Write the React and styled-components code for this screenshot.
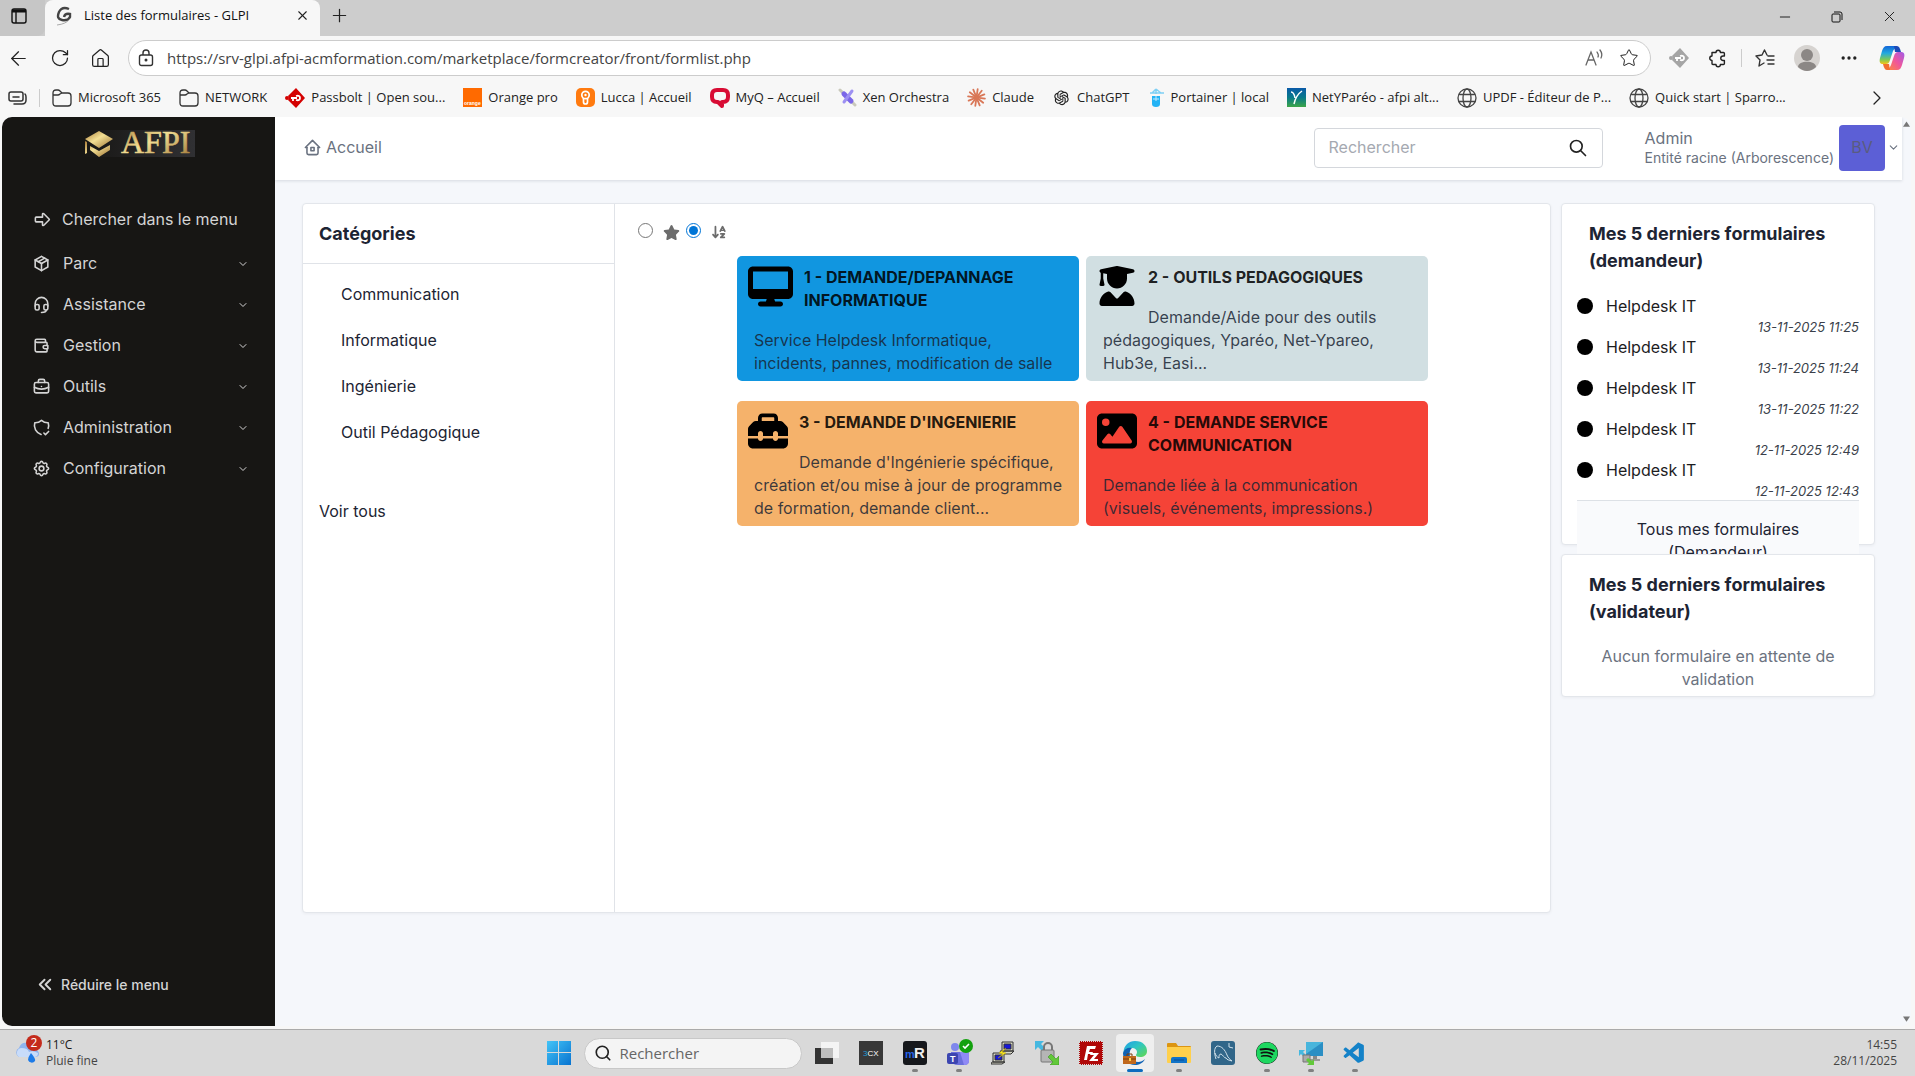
import React, { useState } from 'react';
import styled, { createGlobalStyle } from 'styled-components';

import {
  TbArrowBigRight,
  TbPackage,
  TbHeadset,
  TbWallet,
  TbBriefcase,
  TbShieldCheck,
  TbSettings,
  TbHome2,
  TbSearch,
  TbChevronDown,
  TbChevronsLeft,
} from 'react-icons/tb';
import { FaDesktop, FaUserGraduate, FaToolbox, FaImage, FaStar, FaArrowDownAZ } from 'react-icons/fa6';
import { FaSpotify } from 'react-icons/fa';
import { AiOutlineOpenAI } from 'react-icons/ai';
import { VscVscode } from 'react-icons/vsc';
import { X, Plus, Minus, ArrowLeft, RotateCw, House, Star, Ellipsis, ChevronRight, Search } from 'lucide-react';

const menu = [
  { label: 'Parc', Icon: TbPackage },
  { label: 'Assistance', Icon: TbHeadset },
  { label: 'Gestion', Icon: TbWallet },
  { label: 'Outils', Icon: TbBriefcase },
  { label: 'Administration', Icon: TbShieldCheck },
  { label: 'Configuration', Icon: TbSettings },
];

const categories = ['Communication', 'Informatique', 'Ingénierie', 'Outil Pédagogique'];

const forms = [
  {
    title: '1 - DEMANDE/DEPANNAGE INFORMATIQUE',
    text: 'Service Helpdesk Informatique, incidents, pannes, modification de salle',
    color: '#1196e0',
    Icon: FaDesktop,
    wide: true,
  },
  {
    title: '2 - OUTILS PEDAGOGIQUES',
    text: 'Demande/Aide pour des outils pédagogiques, Yparéo, Net-Ypareo, Hub3e, Easi...',
    color: '#d1dfe2',
    Icon: FaUserGraduate,
  },
  {
    title: "3 - DEMANDE D'INGENIERIE",
    text: "Demande d'Ingénierie spécifique, création et/ou mise à jour de programme de formation, demande client...",
    color: '#f5b26b',
    Icon: FaToolbox,
  },
  {
    title: '4 - DEMANDE SERVICE COMMUNICATION',
    text: 'Demande liée à la communication (visuels, événements, impressions.)',
    color: '#f54337',
    Icon: FaImage,
  },
];

const lastForms = ['13-11-2025 11:25', '13-11-2025 11:24', '13-11-2025 11:22', '12-11-2025 12:49', '12-11-2025 12:43'];

/* ---------- small drawings ---------- */

const PassboltIcon = ({ color = '#d40101', size = 20 }) => (
  <svg width={size} height={size} viewBox="0 0 20 20">
    <path d="M11 0l9 10-9 10-8-8a3 3 0 0 0 0-4z" fill={color} />
    <circle cx="2" cy="10" r="2" fill={color} />
    <path d="M6 10h6M8 10v3M11 8q4-1 4 2t-4 2" stroke="#fff" strokeWidth="1.800" fill="none" />
  </svg>
);

const FolderIcon = () => (
  <svg width="20" height="20" viewBox="0 0 20 20" fill="none" stroke="#333" strokeWidth="1.300">
    <path d="M1 5q0-3 3-3h2q1 0 2 1l2 2h6q3 0 3 3v7q0 3-3 3H4q-3 0-3-3zM1 7h5q1 0 2-1l2-1" />
  </svg>
);

const GlobeIcon = () => (
  <svg width="20" height="20" viewBox="0 0 20 20" fill="none" stroke="#444" strokeWidth="1.300">
    <circle cx="10" cy="10" r="9" />
    <ellipse cx="10" cy="10" rx="4" ry="9" />
    <path d="M2 6.500h16M2 13.500h16" />
  </svg>
);

const LockIcon = () => (
  <svg width="16" height="18" viewBox="0 0 16 18" fill="none" stroke="#333" strokeWidth="1.400">
    <rect x="1.500" y="6" width="13" height="10.500" rx="2" />
    <path d="M5 6V4a3 3 0 0 1 6 0v2" />
    <circle cx="8" cy="11" r=".8" fill="#333" />
  </svg>
);

const ExtensionsIcon = () => (
  <svg width="20" height="20" viewBox="0 0 20 20" fill="none" stroke="#222" strokeWidth="1.400" strokeLinejoin="round">
    <path d="M4 4.500h4a2.200 2.200 0 0 1 4.400 0h3q1 0 1 1V8H15a2.200 2.200 0 0 0 0 4.500h1.400v3q0 1-1 1h-3a2.200 2.200 0 0 1-4.400 0H5q-1 0-1-1v-3a2.200 2.200 0 0 1 0-4.500z" />
  </svg>
);

const OrangeIcon = () => (
  <svg width="19" height="19" viewBox="0 0 19 19">
    <path d="M0 0h19v19H0z" fill="#ff6a00" />
    <text x="1" y="17" fontSize="5" fontFamily="Liberation Sans, sans-serif" fontWeight="700" fill="#fff">orange</text>
  </svg>
);

const LuccaIcon = () => (
  <svg width="19" height="19" viewBox="0 0 19 19">
    <rect width="19" height="19" rx="5" fill="#ff7a0f" />
    <g fill="none" stroke="#fff" strokeWidth="1.700">
      <circle cx="9.500" cy="7" r="3.700" />
      <path d="M7.500 10v4a2 2 0 0 0 4 0v-4" />
    </g>
    <circle cx="9.500" cy="7" r="1.200" fill="#fff" />
  </svg>
);

const MyqIcon = () => (
  <svg width="20" height="20" viewBox="0 0 20 20">
    <path d="M7 2h6q5 0 5 5v2q0 5-5 5h-1v4l-4-4H7q-5 0-5-5V7q0-5 5-5z" fill="none" stroke="#d80c34" strokeWidth="4" strokeLinejoin="round" />
  </svg>
);

const XenIcon = () => (
  <svg width="19" height="19" viewBox="0 0 19 19" fill="none" strokeLinecap="round">
    <path d="M2 2l15 15" stroke="#c9c9bb" strokeWidth="3" />
    <path d="M6 6l7 7" stroke="#7a66e8" strokeWidth="5" />
    <path d="M14 3L6 14" stroke="#9d90f2" strokeWidth="3" />
  </svg>
);

const ClaudeIcon = () => (
  <svg width="19" height="19" viewBox="0 0 19 19" stroke="#d97757" strokeWidth="1.800" strokeLinecap="round">
    {[0, 30, 60, 90, 120, 150].map((a) => (
      <path key={a} d="M9.500 1v17" transform={`rotate(${a + 8} 9.500 9.500)`} />
    ))}
  </svg>
);

const PortainerIcon = () => (
  <svg width="17" height="20" viewBox="0 0 17 20">
    <path d="M8 1v5M2 5h14M8 1l5 4M8 1L4 5" stroke="#7fd0f5" strokeWidth="1.500" fill="none" />
    <path d="M4 8h8v8q0 3-4 3t-4-3z" fill="#24b3f5" />
    <path d="M5 11h6M8 8v5" stroke="#bfe9ff" />
  </svg>
);

const YpareoIcon = () => (
  <svg width="19" height="19" viewBox="0 0 19 19">
    <defs>
      <linearGradient id="yp" x1="0" y1="0" x2="0" y2="1">
        <stop offset="0" stopColor="#0a5aa8" />
        <stop offset=".5" stopColor="#087a8a" />
        <stop offset="1" stopColor="#3da648" />
      </linearGradient>
    </defs>
    <path d="M0 0h19v19H0z" fill="url(#yp)" />
    <path d="M4 4q3 0 4 6M15 3q-6 4-8 13" stroke="#fff" strokeWidth="1.500" fill="none" />
  </svg>
);

const GlpiIcon = () => (
  <svg width="18" height="20" viewBox="0 0 18 20" fill="none">
    <path d="M14 3Q7 0 4 6q-3 7 3 8 6 1 8-3V8q-5-1-6 3" stroke="#444" strokeWidth="2.400" />
    <path d="M2 19q9-1 13-6" stroke="#aaa" />
  </svg>
);

const CopilotIcon = () => (
  <svg width="28" height="28" viewBox="0 0 28 28">
    <defs>
      <linearGradient id="cpA" x1="0" y1="0" x2="0" y2="1">
        <stop offset="0" stopColor="#1265d8" />
        <stop offset=".4" stopColor="#22a9e0" />
        <stop offset=".75" stopColor="#7bc95a" />
        <stop offset="1" stopColor="#f5c414" />
      </linearGradient>
      <linearGradient id="cpB" x1="1" y1="0" x2="0" y2="1">
        <stop offset="0" stopColor="#a05be8" />
        <stop offset=".5" stopColor="#f0569b" />
        <stop offset="1" stopColor="#ff8a3c" />
      </linearGradient>
    </defs>
    <path d="M17 2H9C6 2 5 4 4 7L2 14c-1 4 0 6 3 6h3c2 0 3-1 4-4l3-9c1-2 2-3 4-3z" fill="url(#cpA)" />
    <path d="M11 26h8c3 0 4-2 5-5l2-7c1-4 0-6-3-6h-3c-2 0-3 1-4 4l-3 9c-1 2-2 4-4 4z" fill="url(#cpB)" />
    <path d="M16 2h3c2 0 3 2 4 6h-6z" fill="#1c4bb8" />
    <path d="M12 26H9c-2 0-3-2-4-6h6z" fill="#f26f2e" />
  </svg>
);

const ProfileIcon = () => (
  <svg width="26" height="26" viewBox="0 0 26 26">
    <circle cx="13" cy="13" r="13" fill="#d6d3d0" />
    <circle cx="13" cy="10" r="6" fill="#8b8785" />
    <path d="M4 22c0-7 18-7 18 0q-9 8-18 0z" fill="#8b8785" />
  </svg>
);

const ReadAloudIcon = () => (
  <svg width="20" height="20" viewBox="0 0 20 20" fill="none" stroke="#666" strokeWidth="1.300" strokeLinecap="round">
    <path d="M1 17L6 4l5 13M3 12h6M12 4q2 3 1 5M15 2q3 4 1 8" />
  </svg>
);

const FavListIcon = () => (
  <svg width="20" height="20" viewBox="0 0 20 20" fill="none" stroke="#333" strokeWidth="1.400" strokeLinecap="round" strokeLinejoin="round">
    <path d="M12 7L9.500 2 7 7l-6 1 4 4-1 6 5-3M13 8h6M12 12h7M13 16h6" />
  </svg>
);

const TabsIcon = () => (
  <svg width="18" height="18" viewBox="0 0 18 18" fill="none" stroke="#111" strokeWidth="1.400">
    <rect x="2" y="2" width="14" height="14" rx="2" />
    <path d="M2 4h14" strokeWidth="3" />
    <path d="M6 5v11" />
  </svg>
);

const CollectionsIcon = () => (
  <svg width="19" height="16" viewBox="0 0 19 16" fill="none" stroke="#333" strokeWidth="1.500" strokeLinecap="round">
    <rect x="1" y="2" width="14" height="9" rx="2" />
    <path d="M5 7h6M17 4q1 1 1 3v3q0 4-4 4H6" />
  </svg>
);

const RestoreIcon = () => (
  <svg width="12" height="12" viewBox="0 0 12 12" fill="none" stroke="#111">
    <rect x="1" y="3" width="8" height="8" rx="1" />
    <path d="M3 1h6q2 0 2 2v6" />
  </svg>
);

const LogoSvg = styled.svg`
  overflow: visible;
`;

const AfpiLogo = () => (
  <LogoSvg width="112" height="27" viewBox="0 0 112 27" role="img" aria-label="AFPI">
    <defs>
      <linearGradient id="gold" x1="0" y1="0" x2="1" y2="1">
        <stop offset="0" stopColor="#a87a36" />
        <stop offset=".45" stopColor="#f3df94" />
        <stop offset="1" stopColor="#9c7131" />
      </linearGradient>
      <linearGradient id="logoBg" x1="0" x2="1">
        <stop offset="0" stopColor="#171614" />
        <stop offset="1" stopColor="#303033" />
      </linearGradient>
    </defs>
    <path d="M0 0h112v27H0z" fill="url(#logoBg)" />
    <path d="M2 9L16 1l14 8-14 9z" fill="url(#gold)" />
    <path d="M7 16l9 5 11-6v5l-11 7-9-7zM2 11l2 1v11l-2 1z" fill="url(#gold)" />
    <text x="38" y="23" fontFamily="Liberation Serif, serif" fontSize="32" fill="url(#gold)" stroke="url(#gold)" strokeWidth=".6">AFPI</text>
  </LogoSvg>
);

const StartIcon = () => (
  <svg width="24" height="24" viewBox="0 0 24 24">
    <defs>
      <linearGradient id="win" x1="0" y1="0" x2="1" y2="1">
        <stop offset="0" stopColor="#43c4f7" />
        <stop offset="1" stopColor="#0873d0" />
      </linearGradient>
    </defs>
    <path d="M0 0h11v11H0zM12 0h12v11H12zM0 12h11v12H0zM12 12h12v12H12z" fill="url(#win)" />
  </svg>
);

const TaskViewIcon = () => (
  <svg width="24" height="24" viewBox="0 0 24 24">
    <path d="M0 7h18v16H0z" fill="#333" />
    <path d="M6 1h18v16H6z" fill="#f4f4f4" />
    <path d="M6 7h12v10H6z" fill="#bdbdbd" />
  </svg>
);

const ThreeCxIcon = () => (
  <svg width="24" height="24" viewBox="0 0 24 24">
    <path d="M0 0h24v24H0z" fill="#383838" />
    <text x="4" y="15" fontFamily="Liberation Sans, sans-serif" fontSize="8" fill="#fff">
      <tspan fill="#1d9bd8">3</tspan>CX
    </text>
  </svg>
);

const MrIcon = () => (
  <svg width="24" height="24" viewBox="0 0 24 24">
    <rect width="24" height="24" rx="3" fill="#16181c" />
    <text x="2" y="17" fontFamily="Liberation Sans, sans-serif" fontWeight="700" fontSize="11" fill="#2463e8">m</text>
    <text x="11" y="17" fontFamily="Liberation Sans, sans-serif" fontWeight="700" fontSize="15" fill="#eee">R</text>
  </svg>
);

const TeamsIcon = () => (
  <svg width="28" height="28" viewBox="0 0 28 28">
    <circle cx="10" cy="8" r="4" fill="#7f87ec" />
    <path d="M6 13h16q2 0 2 2v7q0 4-5 4h-6q-6 0-7-5z" fill="#6a6fdc" />
    <path d="M15 13h7q2 0 2 2v7q0 4-5 4z" fill="#8f8af5" />
    <rect x="2" y="14" width="11" height="11" rx="2" fill="#3c45b0" />
    <text x="5" y="23" fontFamily="Liberation Sans, sans-serif" fontWeight="700" fontSize="9" fill="#fff">T</text>
    <circle cx="21" cy="7" r="7" fill="#13a10e" />
    <path d="M18 7l2 2 4-4" stroke="#fff" strokeWidth="1.600" fill="none" />
  </svg>
);

const PuttyIcon = () => (
  <svg width="24" height="24" viewBox="0 0 24 24" stroke="#333">
    <path d="M11 1h11v9H11zM9 10h14l-3 3h-9z" fill="#d8d8c8" />
    <path d="M13 3h7v5h-7z" fill="#1717d8" />
    <path d="M2 12h11v9H2zM1 21h13l-3 2H0z" fill="#d8d8c8" />
    <path d="M4 14h7v5H4z" fill="#1717d8" />
    <path d="M15 7l-7 5 4 1-5 4 8-5-4-1z" fill="#ffee20" stroke="#c0a800" strokeWidth=".5" />
  </svg>
);

const WinscpIcon = () => (
  <svg width="24" height="24" viewBox="0 0 24 24">
    <path d="M0 0h9L6 3l4 4-3 3-4-4-3 3z" fill="#45b8e0" />
    <path d="M9 11V6a4 4 0 0 1 8 0v5" fill="none" stroke="#777" strokeWidth="2" />
    <rect x="6" y="9" width="13" height="12" rx="1" fill="#b5b5b5" stroke="#777" />
    <path d="M24 24h-9l3-3-5-5 3-3 5 5 3-3z" fill="#62c83a" stroke="#3d9420" strokeWidth=".6" />
  </svg>
);

const FilezillaIcon = () => (
  <svg width="24" height="24" viewBox="0 0 24 24">
    <path d="M1 1h22v22H1z" fill="#b00808" stroke="#b00808" strokeWidth="2" strokeDasharray="1 1" />
    <path d="M5 19L8 5h9l-1 3h-5l-1 3h4l-1 2H9l-1 6zM12 12h8l-5 6h4v2h-9l5-6h-4z" fill="#fff" />
  </svg>
);

const EdgeIcon = () => (
  <svg width="24" height="24" viewBox="0 0 24 24">
    <defs>
      <linearGradient id="edge1" x1="0" y1="0" x2="1" y2="1">
        <stop offset="0" stopColor="#1f9ce8" />
        <stop offset=".45" stopColor="#2ec6c4" />
        <stop offset="1" stopColor="#62d84c" />
      </linearGradient>
    </defs>
    <path d="M1 14C-1 6 5 0 12 0c8 0 12 5 12 10 0 4-3 6-7 6-3 0-4-1-4-2s1-1 1-3-2-4-5-4c-4 0-7 3-8 7z" fill="url(#edge1)" />
    <path d="M0 12c1-4 5-6 9-5-3 2-4 10 2 13 4 2 8 1 11-2-2 4-6 6-10 6-7 0-12-5-12-12z" fill="#0f62b4" />
    <path d="M0 15h13v8H0z" fill="#c0681c" />
    <path d="M4 15v-2h5v2M0 18h13" stroke="#7b3c0c" fill="none" />
    <path d="M6 17h2v3H6z" fill="#ffcf4a" />
  </svg>
);

const ExplorerIcon = () => (
  <svg width="24" height="24" viewBox="0 0 24 24">
    <path d="M0 3q0-1 1-1h8l2 3h12q1 0 1 1v4H0z" fill="#dc9512" />
    <path d="M0 6h24v15q0 1-1 1H1q-1 0-1-1z" fill="#ffd04c" />
    <path d="M4 22v-4q0-2 2-2h12q2 0 2 2v4z" fill="#1173c7" />
    <path d="M7 19h10" stroke="#0b4f94" />
  </svg>
);

const MysqlIcon = () => (
  <svg width="24" height="24" viewBox="0 0 24 24">
    <rect width="24" height="24" rx="3" fill="#316689" />
    <path d="M5 18c-2-6-2-11 1-13 5 0 8 4 10 9 1 3 3 4 5 6-3-1-5-1-6-3-2 0-3-3-5-4-2 0-2 2-2 4-2-1-3-2-4-5M18 2v4l4 1" fill="none" stroke="#cfe0ea" />
  </svg>
);

const RemoteIcon = () => (
  <svg width="24" height="24" viewBox="0 0 24 24">
    <path d="M7 1h17v14H7z" fill="#2b8fc4" />
    <path d="M7 1h17L7 13z" fill="#48b5dc" />
    <path d="M14 15h4v4h-4z" fill="#888" />
    <path d="M11 19h10" stroke="#999" strokeWidth="2" />
    <path d="M0 9h6L4 11l3 3-2 2-3-3-2 2z" fill="#45b8e0" />
    <path d="M4 14h7v7H4z" fill="#aaa" stroke="#777" />
    <path d="M15 24H8l2-2-3-3 2-2 4 3 2-2z" fill="#62c83a" />
  </svg>
);

const WeatherIcon = () => (
  <svg width="26" height="24" viewBox="0 0 26 24">
    <path d="M5 16a5 5 0 0 1 0-9q2-6 8-5 6 0 7 6 5 1 5 5 0 3-4 3z" fill="#8fb4ee" />
    <path d="M5 16a5 5 0 0 1 2-9q7 0 8 4 4-2 9 1 0 4-4 4z" fill="#c8dcfa" />
    <path d="M17 12q5 6 4 8a4 4 0 0 1-7-1q0-3 3-7z" fill="#1d7be8" />
  </svg>
);

const SpotifyIcon = styled(FaSpotify)`
  background: #111;
  border-radius: 50%;
  color: #1ed760;
`;

const bookmarks = [
  { label: 'Microsoft 365', icon: <FolderIcon /> },
  { label: 'NETWORK', icon: <FolderIcon /> },
  { label: 'Passbolt | Open sou...', icon: <PassboltIcon /> },
  { label: 'Orange pro', icon: <OrangeIcon /> },
  { label: 'Lucca | Accueil', icon: <LuccaIcon /> },
  { label: 'MyQ – Accueil', icon: <MyqIcon /> },
  { label: 'Xen Orchestra', icon: <XenIcon /> },
  { label: 'Claude', icon: <ClaudeIcon /> },
  { label: 'ChatGPT', icon: <AiOutlineOpenAI size={19} color="#222" /> },
  { label: 'Portainer | local', icon: <PortainerIcon /> },
  { label: 'NetYParéo - afpi alt...', icon: <YpareoIcon /> },
  { label: 'UPDF - Éditeur de P...', icon: <GlobeIcon /> },
  { label: 'Quick start | Sparro...', icon: <GlobeIcon /> },
];

const tasks = [
  { name: 'Vue des tâches', icon: <TaskViewIcon /> },
  { name: '3CX', icon: <ThreeCxIcon /> },
  { name: 'mRemoteNG', icon: <MrIcon />, open: true },
  { name: 'Teams', icon: <TeamsIcon />, open: true },
  { name: 'PuTTY', icon: <PuttyIcon /> },
  { name: 'WinSCP', icon: <WinscpIcon /> },
  { name: 'FileZilla', icon: <FilezillaIcon /> },
  { name: 'Edge', icon: <EdgeIcon />, open: true, active: true },
  { name: 'Explorateur', icon: <ExplorerIcon />, open: true },
  { name: 'MySQL Workbench', icon: <MysqlIcon /> },
  { name: 'Spotify', icon: <SpotifyIcon size={22} />, open: true },
  { name: 'Bureau distant', icon: <RemoteIcon />, open: true },
  { name: 'VS Code', icon: <VscVscode size={25} color="#1482c8" />, open: true },
];

export default function App() {
  const [sort, setSort] = useState('alpha');

  return (
    <>
      <GlobalStyle />
      <Screen>
        <TabStrip>
          <TabMenu aria-label="Onglets"><TabsIcon /></TabMenu>
          <Tab>
            <GlpiIcon />
            <span>Liste des formulaires - GLPI</span>
            <IconButton aria-label="Fermer l'onglet"><X size={15} strokeWidth={1.7} /></IconButton>
          </Tab>
          <NewTab aria-label="Nouvel onglet"><Plus size={21} strokeWidth={1.4} /></NewTab>
          <WindowButtons>
            <IconButton aria-label="Réduire"><Minus size={16} strokeWidth={1.5} /></IconButton>
            <IconButton aria-label="Restaurer"><RestoreIcon /></IconButton>
            <IconButton aria-label="Fermer"><X size={17} strokeWidth={1.4} /></IconButton>
          </WindowButtons>
        </TabStrip>

        <Toolbar>
          <NavButtons>
            <IconButton aria-label="Retour"><ArrowLeft size={23} strokeWidth={1.3} /></IconButton>
            <IconButton aria-label="Actualiser"><RotateCw size={20} strokeWidth={1.5} /></IconButton>
            <IconButton aria-label="Accueil"><House size={21} strokeWidth={1.4} /></IconButton>
          </NavButtons>
          <AddressBar>
            <LockIcon />
            <input
              aria-label="Adresse"
              defaultValue="https://srv-glpi.afpi-acmformation.com/marketplace/formcreator/front/formlist.php"
            />
            <IconButton aria-label="Lecture à voix haute"><ReadAloudIcon /></IconButton>
            <IconButton aria-label="Favori"><Star size={20} strokeWidth={1.2} /></IconButton>
          </AddressBar>
          <BrowserActions>
            <IconButton aria-label="Passbolt"><PassboltIcon color="#a5a5a5" /></IconButton>
            <IconButton aria-label="Extensions"><ExtensionsIcon /></IconButton>
            <Divider />
            <IconButton aria-label="Favoris"><FavListIcon /></IconButton>
            <IconButton aria-label="Profil"><ProfileIcon /></IconButton>
            <IconButton aria-label="Paramètres"><Ellipsis size={20} /></IconButton>
            <IconButton aria-label="Copilot"><CopilotIcon /></IconButton>
          </BrowserActions>
        </Toolbar>

        <Bookmarks>
          <IconButton aria-label="Collections"><CollectionsIcon /></IconButton>
          <Divider />
          <BookmarkList>
            {bookmarks.map((b) => (
              <Bookmark href="#" key={b.label}>{b.icon}{b.label}</Bookmark>
            ))}
          </BookmarkList>
          <IconButton aria-label="Autres favoris"><ChevronRight size={24} strokeWidth={1.3} /></IconButton>
        </Bookmarks>

        <Page>
          <Sidebar>
            <Logo><AfpiLogo /></Logo>
            <nav>
              <SearchLink href="#"><TbArrowBigRight size={19} />Chercher dans le menu</SearchLink>
              {menu.map(({ label, Icon }) => (
                <MenuItem key={label}>
                  <Icon size={19} />
                  <span>{label}</span>
                  <TbChevronDown size={12} />
                </MenuItem>
              ))}
            </nav>
            <Collapse><TbChevronsLeft size={23} />Réduire le menu</Collapse>
          </Sidebar>

          <Main>
            <TopBar>
              <Crumb href="#"><TbHome2 size={19} />Accueil</Crumb>
              <SearchBox>
                <input type="search" placeholder="Rechercher" aria-label="Rechercher" />
                <IconButton aria-label="Lancer la recherche"><TbSearch size={20} /></IconButton>
              </SearchBox>
              <UserMenu>
                <UserText>
                  <span>Admin</span>
                  <small>Entité racine (Arborescence)</small>
                </UserText>
                <Avatar>BV</Avatar>
                <TbChevronDown size={13} />
              </UserMenu>
            </TopBar>

            <Content>
              <FormPanel>
                <Categories>
                  <h2>Catégories</h2>
                  <ul>
                    {categories.map((c) => <li key={c}><a href="#">{c}</a></li>)}
                  </ul>
                  <AllLink href="#">Voir tous</AllLink>
                </Categories>
                <FormArea>
                  <SortBar>
                    <input type="radio" name="sort" aria-label="Popularité" checked={sort === 'popular'} onChange={() => setSort('popular')} />
                    <FaStar size={17} />
                    <input type="radio" name="sort" aria-label="Alphabétique" checked={sort === 'alpha'} onChange={() => setSort('alpha')} />
                    <FaArrowDownAZ size={16} />
                  </SortBar>
                  <FormGrid>
                    {forms.map(({ title, text, color, Icon, wide }) => (
                      <FormCard key={title} href="#" $color={color}>
                        <CardIcon $wide={wide}><Icon size={wide ? 45 : 40} /></CardIcon>
                        <h3>{title}</h3>
                        <p>{text}</p>
                      </FormCard>
                    ))}
                  </FormGrid>
                </FormArea>
              </FormPanel>

              <Aside>
                <LastForms>
                  <h2>Mes 5 derniers formulaires (demandeur)</h2>
                  <ul>
                    {lastForms.map((date) => (
                      <FormEntry key={date}>
                        <a href="#">Helpdesk IT</a>
                        <time>{date}</time>
                      </FormEntry>
                    ))}
                  </ul>
                  <AllForms href="#">Tous mes formulaires (Demandeur)</AllForms>
                </LastForms>
                <Validations>
                  <h2>Mes 5 derniers formulaires (validateur)</h2>
                  <p>Aucun formulaire en attente de validation</p>
                </Validations>
              </Aside>
            </Content>
          </Main>

          <Scrollbar>
            <svg width="7" height="6" viewBox="0 0 8 6"><path d="M0 6l4-6 4 6z" fill="#777" /></svg>
            <svg width="7" height="6" viewBox="0 0 8 6"><path d="M0 0l4 6 4-6z" fill="#777" /></svg>
          </Scrollbar>
        </Page>

        <Taskbar>
          <Weather>
            <WeatherIcon />
            <Badge>2</Badge>
            <div>
              <span>11°C</span>
              <small>Pluie fine</small>
            </div>
          </Weather>
          <Tasks>
            <Task aria-label="Démarrer"><StartIcon /></Task>
            <TaskSearch>
              <Search size={18} strokeWidth={2.2} />
              <input type="search" placeholder="Rechercher" aria-label="Rechercher dans Windows" />
            </TaskSearch>
            {tasks.map((t) => (
              <Task key={t.name} aria-label={t.name} $open={t.open} $active={t.active}>{t.icon}</Task>
            ))}
          </Tasks>
          <Clock>
            <time>14:55</time>
            <time>28/11/2025</time>
          </Clock>
        </Taskbar>
      </Screen>
    </>
  );
}

const GlobalStyle = createGlobalStyle`
  * { box-sizing: border-box; }
  body {
    margin: 0;
    font-family: Inter, "Liberation Sans", sans-serif;
    font-size: 16px;
    line-height: 23px;
    color: #1d2433;
  }
  h2, h3, p, ul { margin: 0; padding: 0; }
  ul { list-style: none; }
  a { color: inherit; text-decoration: none; }
  button, input { font: inherit; color: inherit; }
  svg { flex-shrink: 0; display: block; }
  input[type='search'] { appearance: none; }
`;

const Screen = styled.div`
  min-height: 100vh;
  display: flex;
  flex-direction: column;
  background: #f7f7f7;
`;

const IconButton = styled.button`
  display: flex;
  align-items: center;
  justify-content: center;
  padding: 0;
  border: none;
  background: none;
  color: #222;
`;

/* browser */

const TabStrip = styled.div`
  height: 36px;
  display: flex;
  background: #cdcdcd;
  font-family: "Open Sans", "Noto Sans", sans-serif;
  font-size: 13px;
`;

const TabMenu = styled(IconButton)`
  width: 45px;
  padding: 0 8px 4px 0;
  background: #c6c6c6;
  border-radius: 0 0 8px 0;
`;

const Tab = styled.div`
  width: 275px;
  margin-right: 9px;
  padding: 0 10px 5px;
  display: flex;
  align-items: center;
  gap: 11px;
  background: #f7f7f7;
  border-radius: 8px 8px 0 0;
  color: #111;
  span { flex: 1; }
`;

const NewTab = styled(IconButton)`
  padding-bottom: 5px;
`;

const WindowButtons = styled.div`
  margin-left: auto;
  padding-bottom: 3px;
  display: flex;
  button { width: 52px; }
`;

const Toolbar = styled.div`
  height: 44px;
  display: flex;
  align-items: center;
`;

const NavButtons = styled.div`
  width: 128px;
  padding-left: 7px;
  display: flex;
  gap: 20px;
`;

const AddressBar = styled.div`
  flex: 1;
  height: 36px;
  padding: 0 11px 0 9px;
  display: flex;
  align-items: center;
  gap: 11px;
  background: #fff;
  border: 1px solid #ccc;
  border-radius: 18px;
  color: #333;
  input {
    flex: 1;
    border: none;
    outline: none;
    background: none;
    font-family: "Open Sans", "Noto Sans", sans-serif;
    font-size: 15px;
    color: #444;
  }
  button:last-child { margin-left: 3px; }
`;

const BrowserActions = styled.div`
  width: 264px;
  padding-left: 18px;
  display: flex;
  align-items: center;
  gap: 19px;
`;

const Divider = styled.span`
  width: 1px;
  height: 18px;
  margin: 0 -6px;
  background: #ccc;
`;

const Bookmarks = styled.div`
  height: 37px;
  padding: 0 26px 2px 8px;
  display: flex;
  align-items: center;
  gap: 18px;
`;

const BookmarkList = styled.div`
  flex: 1;
  display: flex;
  gap: 18px;
`;

const Bookmark = styled.a`
  display: flex;
  align-items: center;
  gap: 6px;
  font-family: "Open Sans", "Noto Sans", sans-serif;
  font-size: 13px;
  color: #222;
  white-space: nowrap;
`;

/* page */

const Page = styled.div`
  flex: 1;
  margin: 0 4px 3px 2px;
  display: flex;
  background: #f5f7fb;
  border-radius: 10px;
  overflow: hidden;
`;

const Sidebar = styled.aside`
  width: 273px;
  display: flex;
  flex-direction: column;
  background: #171614;
  color: #d4d4d4;
`;

const Logo = styled.div`
  height: 80px;
  padding: 13px 0 0 81px;
`;

const SearchLink = styled.a`
  height: 44px;
  margin-bottom: 2px;
  padding-left: 31px;
  display: flex;
  align-items: center;
  gap: 10px;
`;

const MenuItem = styled.button`
  width: 100%;
  height: 41px;
  padding: 0 26px 0 30px;
  display: flex;
  align-items: center;
  gap: 12px;
  border: none;
  background: none;
  text-align: left;
  span { flex: 1; }
`;

const Collapse = styled.button`
  margin: auto 0 30px;
  padding: 0 0 0 32px;
  display: flex;
  align-items: center;
  gap: 4px;
  border: none;
  background: none;
  font-size: 14px;
  font-weight: 500;
`;

const Main = styled.main`
  flex: 1;
  min-width: 0;
`;

const TopBar = styled.header`
  height: 63px;
  padding: 0 2px 2px 28px;
  display: flex;
  align-items: center;
  background: #fff;
  box-shadow: 0 1px 3px rgba(30, 40, 60, 0.14);
  color: #6a7280;
`;

const Crumb = styled.a`
  margin-right: auto;
  display: flex;
  align-items: center;
  gap: 4px;
`;

const SearchBox = styled.div`
  width: 289px;
  height: 40px;
  margin-right: 42px;
  padding: 0 14px;
  display: flex;
  align-items: center;
  border: 1px solid #d4d7dc;
  border-radius: 4px;
  input {
    flex: 1;
    min-width: 0;
    padding: 0;
    border: none;
    outline: none;
  }
  input::placeholder { color: #a5a9b1; }
`;

const UserMenu = styled.div`
  display: flex;
  align-items: center;
  gap: 5px;
  > svg { margin-left: -3px; }
`;

const UserText = styled.div`
  display: flex;
  flex-direction: column;
  line-height: 19px;
  small { font-size: 14px; }
`;

const Avatar = styled.div`
  width: 46px;
  height: 46px;
  display: grid;
  place-items: center;
  background: #5c5fd6;
  border-radius: 4px;
  color: #5a5c80;
`;

const Content = styled.div`
  padding: 23px 27px;
  display: flex;
  align-items: flex-start;
  gap: 10px;
  h2 {
    font-size: 18px;
    line-height: 27px;
    font-weight: 700;
  }
`;

const Panel = styled.section`
  background: #fff;
  border: 1px solid #e3e6eb;
  border-radius: 4px;
  box-shadow: 0 1px 3px rgba(30, 40, 60, 0.05);
`;

const FormPanel = styled(Panel)`
  flex: 1;
  min-height: 66vh;
  display: flex;
`;

const Categories = styled.div`
  width: 312px;
  border-right: 1px solid #e0e3e8;
  h2 {
    padding: 16px;
    border-bottom: 1px solid #e0e3e8;
  }
  ul { padding: 7px 38px; }
  li { line-height: 46px; }
`;

const AllLink = styled.a`
  display: block;
  margin: 38px 16px;
`;

const FormArea = styled.div`
  flex: 1;
`;

const SortBar = styled.div`
  height: 52px;
  padding: 4px 0 0 23px;
  display: flex;
  align-items: center;
  color: #6c6c6c;
  input {
    width: 15px;
    height: 15px;
    margin: 0 10px 4px 0;
    accent-color: #0075d6;
  }
  svg + input { margin-left: 6px; }
`;

const FormGrid = styled.div`
  display: grid;
  grid-template-columns: repeat(2, 342px);
  gap: 20px 7px;
  justify-content: center;
`;

const FormCard = styled.a`
  height: 125px;
  overflow: hidden;
  background: ${(p) => p.$color};
  border-radius: 5px;
  h3 {
    padding: 10px 16px 0 0;
    font-size: 16px;
    line-height: 23px;
    font-weight: 700;
    color: rgba(0, 0, 0, 0.87);
  }
  p {
    padding: 17px 16px 0 17px;
    color: rgba(24, 36, 51, 0.85);
  }
`;

const CardIcon = styled.span`
  float: left;
  width: ${(p) => (p.$wide ? 45 : 40)}px;
  height: 40px;
  margin: 10px 11px 4px;
  display: flex;
  align-items: center;
  justify-content: center;
  color: #000;
`;

const Aside = styled.aside`
  width: 314px;
  display: flex;
  flex-direction: column;
  gap: 9px;
`;

const LastForms = styled(Panel)`
  height: 342px;
  padding: 16px 15px;
  h2 { padding: 0 12px 21px; }
`;

const FormEntry = styled.li`
  height: 41px;
  padding-left: 29px;
  position: relative;
  display: flex;
  flex-direction: column;
  color: #1d1d1f;
  &::before {
    content: '';
    position: absolute;
    left: 0;
    top: 3px;
    width: 16px;
    height: 16px;
    border-radius: 50%;
    background: #000;
  }
  time {
    align-self: flex-end;
    font-size: 13px;
    line-height: 19px;
    font-style: italic;
    color: #3a3f4a;
  }
`;

const AllForms = styled.a`
  display: block;
  padding: 17px 40px;
  background: #f9fafc;
  border-top: 1px solid #dde1e6;
  text-align: center;
`;

const Validations = styled(Panel)`
  position: relative;
  padding: 16px 15px 5px;
  h2 { padding: 0 12px 20px; }
  p {
    padding: 0 20px;
    text-align: center;
    color: #6c737f;
  }
`;

const Scrollbar = styled.div`
  width: 9px;
  padding: 4px 1px;
  display: flex;
  flex-direction: column;
  justify-content: space-between;
`;

/* windows taskbar */

const Taskbar = styled.footer`
  height: 47px;
  display: grid;
  grid-template-columns: 1fr auto 1fr;
  align-items: center;
  background: #d9d9d9;
  border-top: 1px solid #aaa;
  font-family: "Open Sans", "Noto Sans", sans-serif;
  font-size: 12px;
  line-height: 16px;
  color: #444;
`;

const Weather = styled.div`
  position: relative;
  padding-left: 14px;
  display: flex;
  align-items: center;
  gap: 6px;
  div {
    display: flex;
    flex-direction: column;
  }
  span { color: #1a1a1a; }
  small { font-size: 12px; }
`;

const Badge = styled.b`
  position: absolute;
  left: 26px;
  top: -2px;
  width: 16px;
  height: 16px;
  background: #c42b1c;
  border-radius: 50%;
  color: #fff;
  font-weight: 400;
  text-align: center;
`;

const Tasks = styled.div`
  padding-right: 2px;
  display: flex;
  align-items: center;
  gap: 6px;
`;

const Task = styled.button`
  position: relative;
  width: 38px;
  height: 38px;
  padding: 0;
  display: grid;
  place-items: center;
  border: none;
  border-radius: 4px;
  background: ${(p) => (p.$active ? '#efefef' : 'none')};
  &::after {
    content: '';
    display: ${(p) => (p.$open ? 'block' : 'none')};
    position: absolute;
    bottom: 0;
    width: ${(p) => (p.$active ? 16 : 6)}px;
    height: 3px;
    border-radius: 2px;
    background: ${(p) => (p.$active ? '#0b6cbf' : '#808080')};
  }
`;

const TaskSearch = styled.div`
  width: 218px;
  height: 31px;
  padding: 0 9px;
  display: flex;
  align-items: center;
  gap: 8px;
  background: #f4f4f4;
  border: 1px solid #c8c8c8;
  border-radius: 16px;
  color: #222;
  input {
    width: 100%;
    padding: 0;
    border: none;
    outline: none;
    background: none;
    font-size: 15px;
  }
  input::placeholder { color: #666; }
`;

const Clock = styled.div`
  padding-right: 18px;
  display: flex;
  flex-direction: column;
  align-items: flex-end;
`;
